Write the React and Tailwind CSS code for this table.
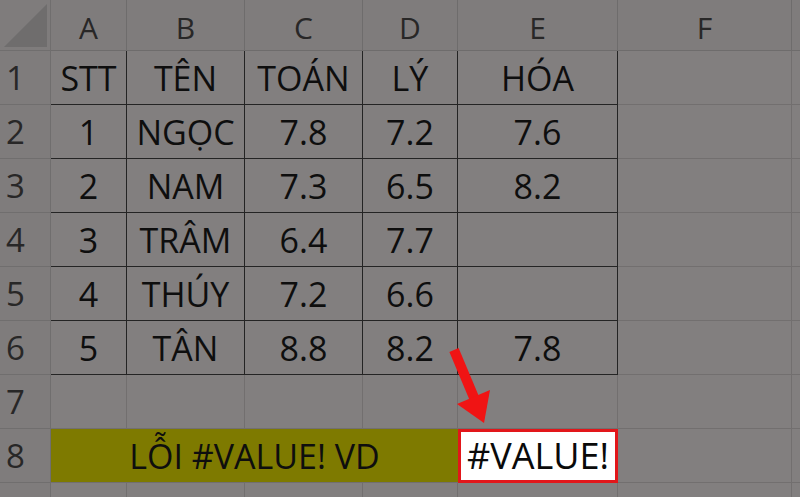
import React from "react";

const cols = ["A", "B", "C", "D", "E", "F"];
const data = [
  ["STT", "TÊN", "TOÁN", "LÝ", "HÓA"],
  ["1", "NGỌC", "7.8", "7.2", "7.6"],
  ["2", "NAM", "7.3", "6.5", "8.2"],
  ["3", "TRÂM", "6.4", "7.7", ""],
  ["4", "THÚY", "7.2", "6.6", ""],
  ["5", "TÂN", "8.8", "8.2", "7.8"],
];

const font = { fontFamily: '"Open Sans", "Noto Sans", sans-serif' };

export default function App() {
  const cells = [];

  // header row
  cells.push(
    <div key="corner" className="relative border-r border-b border-[#706e6e] bg-[#7f7c7c]">
      <svg className="absolute inset-0" width="50" height="50" viewBox="0 0 50 50">
        <polygon points="4,47 47,4 47,47" fill="#6f6d6d" />
      </svg>
    </div>
  );
  cols.forEach((c) => {
    cells.push(
      <div
        key={"h" + c}
        className="flex items-center justify-center pt-[6px] border-r border-b border-[#6e6c6c] bg-[#7f7c7c] text-[30px] leading-none text-[#282727]"
      >
        {c}
      </div>
    );
  });
  cells.push(<div key="hpad" className="border-b border-[#6e6c6c] bg-[#7f7c7c]" />);

  // rows 1-7
  for (let r = 0; r < 7; r++) {
    const inTable = r < 6;
    cells.push(
      <div
        key={"rh" + r}
        className="flex items-center pl-[6px] border-r border-b border-[#706e6e] bg-[#7f7c7c] text-[33px] leading-none text-[#282727]"
      >
        {r + 1}
      </div>
    );
    for (let c = 0; c < 6; c++) {
      const t = inTable && c < 5;
      cells.push(
        <div
          key={"c" + r + "-" + c}
          className={
            t
              ? "flex items-center justify-center border-r border-b border-[#242424] bg-[#827f7f] text-[34px] leading-none text-[#0e0e0e]"
              : "flex items-center justify-center border-r border-b border-[#726f6f] bg-[#827f7f] text-[34px] leading-none text-[#0e0e0e]"
          }
        >
          {t ? data[r][c] : ""}
        </div>
      );
    }
    cells.push(<div key={"pad" + r} className="border-b border-[#726f6f] bg-[#827f7f]" />);
  }

  // row 8
  cells.push(
    <div
      key="rh8"
      className="flex items-center pl-[6px] border-r border-b border-[#706e6e] bg-[#7f7c7c] text-[33px] leading-none text-[#282727]"
    >
      8
    </div>
  );
  cells.push(
    <div
      key="olive"
      className="col-span-4 flex items-center justify-center border-b border-[#726f6f] bg-[#7e7a00] text-[34px] leading-none text-[#0e0e0e]"
    >
      LỖI #VALUE! VD
    </div>
  );
  cells.push(
    <div
      key="err"
      className="flex items-center justify-center border-[3px] border-[#e2161a] bg-white text-[36px] leading-none text-[#0a0a0a]"
    >
      #VALUE!
    </div>
  );
  cells.push(<div key="f8" className="border-r border-b border-[#726f6f] bg-[#827f7f]" />);
  cells.push(<div key="pad8" className="border-b border-[#726f6f] bg-[#827f7f]" />);

  // bottom strip
  cells.push(<div key="b0" className="border-r border-[#706e6e] bg-[#7f7c7c]" />);
  for (let c = 0; c < 6; c++) {
    cells.push(<div key={"b" + (c + 1)} className="border-r border-[#726f6f] bg-[#827f7f]" />);
  }
  cells.push(<div key="b7" className="bg-[#827f7f]" />);

  return (
    <div className="relative w-[800px] h-[497px] overflow-hidden bg-[#827f7f]" style={font}>
      <div className="grid w-[800px] h-[497px] grid-cols-[51px_76px_118px_118px_95px_160px_174px_8px] grid-rows-[51px_54px_54px_54px_54px_54px_54px_54px_54px_14px]">
        {cells}
      </div>
      <svg className="absolute left-0 top-0 pointer-events-none" width="800" height="497" viewBox="0 0 800 497">
        <line x1="454" y1="350" x2="475" y2="400" stroke="#f01414" strokeWidth="10" strokeLinecap="butt" />
        <polygon points="484,423 457,404 490,390" fill="#f01414" />
      </svg>
    </div>
  );
}
